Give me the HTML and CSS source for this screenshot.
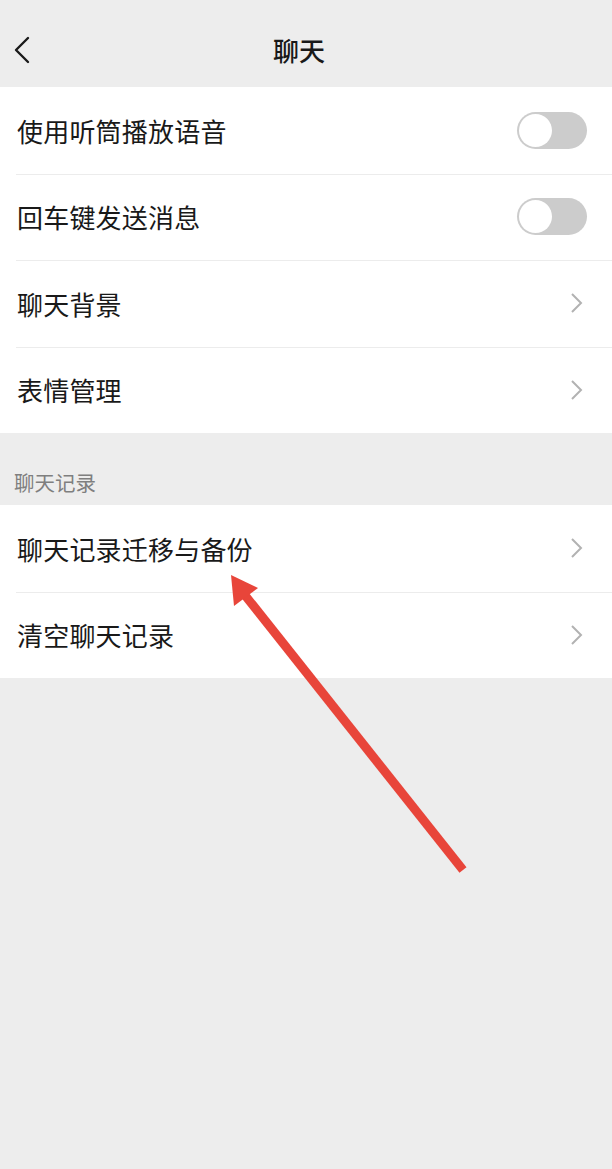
FILE: index.html
```html
<!DOCTYPE html>
<html lang="zh">
<head>
<meta charset="utf-8">
<link rel="stylesheet" href="styles.css">
</head>
<body>
<div class="page">
  <header class="nav">
    <svg class="back" width="18" height="28" viewBox="0 0 18 28"><path d="M15 2 L3 14 L15 26" fill="none" stroke="#1a1a1a" stroke-width="2.4" stroke-linecap="round" stroke-linejoin="round"/></svg>
    <div class="title">聊天</div>
  </header>
  <section class="group">
    <div class="row"><span class="label">使用听筒播放语音</span><span class="switch"><span class="knob"></span></span></div>
    <div class="row"><span class="label">回车键发送消息</span><span class="switch"><span class="knob"></span></span></div>
    <div class="row"><span class="label">聊天背景</span><svg class="chev" width="14" height="22" viewBox="0 0 14 22"><path d="M2 2 L11 11 L2 20" fill="none" stroke="#b2b2b2" stroke-width="2"/></svg></div>
    <div class="row"><span class="label">表情管理</span><svg class="chev" width="14" height="22" viewBox="0 0 14 22"><path d="M2 2 L11 11 L2 20" fill="none" stroke="#b2b2b2" stroke-width="2"/></svg></div>
  </section>
  <div class="sec-title">聊天记录</div>
  <section class="group">
    <div class="row"><span class="label">聊天记录迁移与备份</span><svg class="chev" width="14" height="22" viewBox="0 0 14 22"><path d="M2 2 L11 11 L2 20" fill="none" stroke="#b2b2b2" stroke-width="2"/></svg></div>
    <div class="row"><span class="label">清空聊天记录</span><svg class="chev" width="14" height="22" viewBox="0 0 14 22"><path d="M2 2 L11 11 L2 20" fill="none" stroke="#b2b2b2" stroke-width="2"/></svg></div>
  </section>
  <svg class="arrow" width="612" height="1169" viewBox="0 0 612 1169">
    <line x1="463" y1="870" x2="244" y2="594" stroke="#e8453a" stroke-width="9" stroke-linecap="butt"/>
    <polygon points="231,575 258,588 234,606" fill="#e8453a"/>
  </svg>
</div>
</body>
</html>
```
FILE: styles.css
```css
html, body {
  margin: 0;
  padding: 0;
  background: #ededed;
}
.page {
  position: relative;
  width: 612px;
  min-height: 1169px;
  font-family: "Noto Sans CJK SC", "Noto Sans", sans-serif;
  color: #191919;
}
.nav {
  height: 87px;
  box-sizing: border-box;
  padding-top: 12px;
  display: flex;
  align-items: center;
  justify-content: center;
  position: relative;
}
.back {
  position: absolute;
  left: 13px;
  top: 36px;
}
.title {
  font-size: 26px;
  font-weight: 500;
  margin-left: -14px;
}
.group {
  background: #fff;
}
.row {
  height: 86.5px;
  display: flex;
  align-items: center;
  justify-content: space-between;
  padding: 0 24px 0 17px;
  position: relative;
}
.row + .row::before {
  content: "";
  position: absolute;
  left: 16px;
  right: 0;
  top: 0;
  border-top: 1px solid #ececec;
}
.label {
  font-size: 26px;
  letter-spacing: 0.2px;
}
.switch {
  width: 70px;
  height: 37px;
  border-radius: 19px;
  background: #cccccc;
  position: relative;
  margin-right: 1px;
}
.knob {
  position: absolute;
  left: 2px;
  top: 2px;
  width: 33px;
  height: 33px;
  border-radius: 50%;
  background: #fff;
}
.chev {
  margin-right: 4px;
}
.sec-title {
  height: 72px;
  box-sizing: border-box;
  padding: 34px 0 0 14px;
  font-size: 20.5px;
  color: #7f7f7f;
}
.arrow {
  position: absolute;
  left: 0;
  top: 0;
  pointer-events: none;
}
```
